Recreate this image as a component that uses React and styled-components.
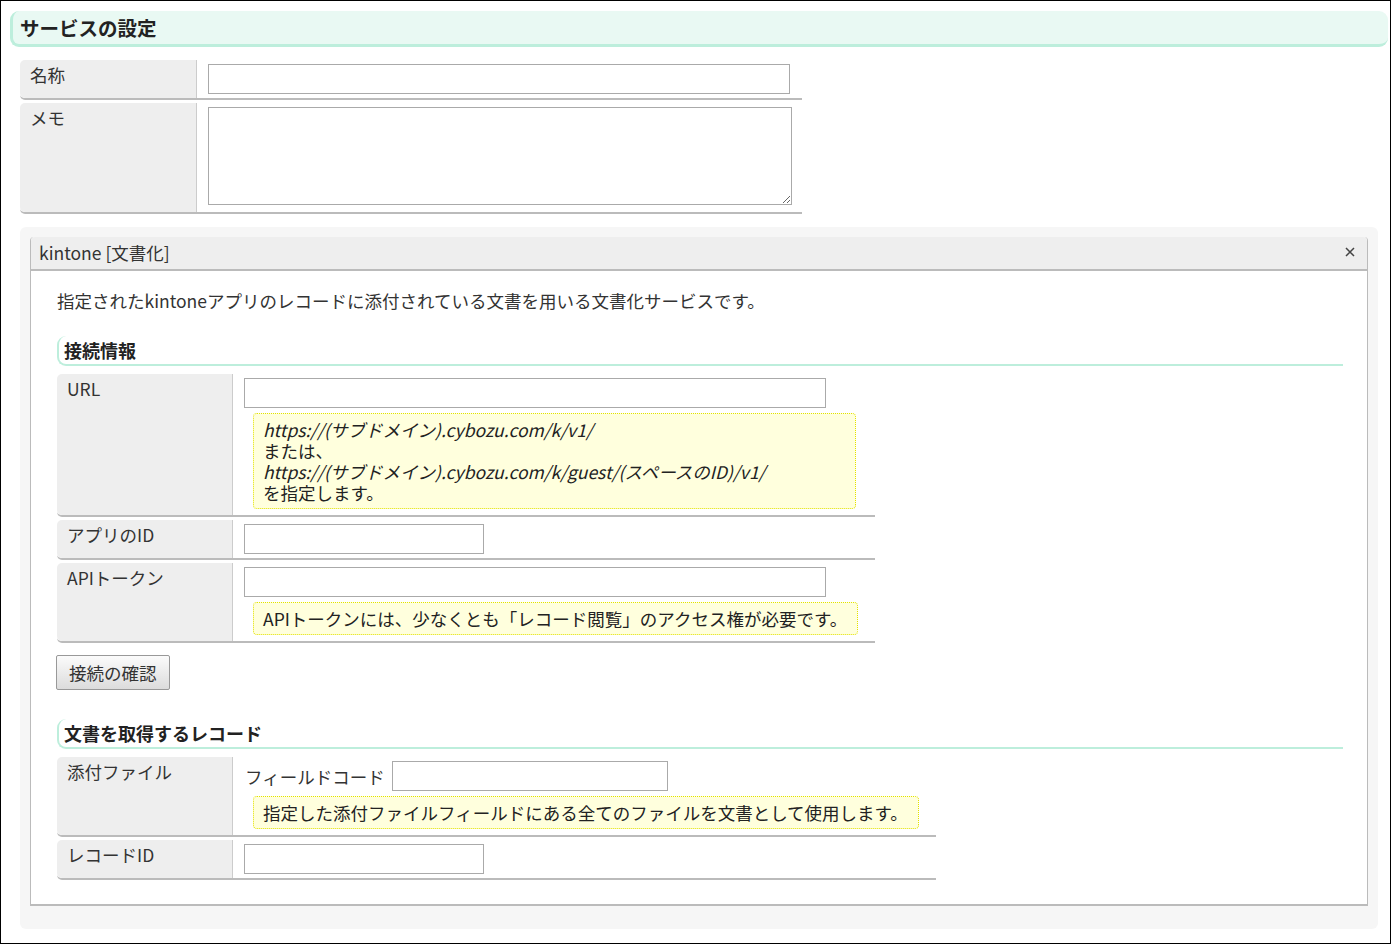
import React from 'react'
import styled, { createGlobalStyle } from 'styled-components'

const GlobalStyle = createGlobalStyle`
  html, body {
    margin: 0;
    padding: 0;
    background: #fff;
  }
  body {
    font-family: "Noto Sans CJK JP", "Noto Sans", sans-serif;
    font-size: 17.5px;
    line-height: 21px;
    color: #333;
  }
  * { box-sizing: border-box; }
`

const Frame = styled.div`
  width: 1391px;
  height: 944px;
  border: 1px solid #000;
  padding: 10px 2px 0 9px;
  overflow: hidden;
`

const PageTitle = styled.h1`
  margin: 0;
  height: 36px;
  display: flex;
  align-items: center;
  padding-left: 7px;
  font-size: 19.5px;
  font-weight: bold;
  color: #222;
  background: #e9f9f3;
  border-left: 3px solid #bdeedc;
  border-bottom: 3px solid #bdeedc;
  border-radius: 9px;
`

const SubTitle = styled.h2`
  margin: 0;
  height: 30px;
  display: flex;
  align-items: center;
  padding-left: 5px;
  font-size: 18px;
  font-weight: bold;
  color: #222;
  border-left: 2px solid #bdeedc;
  border-bottom: 2px solid #bdeedc;
  border-radius: 9px 0 0 9px;
`

const Table = styled.div`
  display: flex;
  flex-direction: column;
  gap: 3px;
  width: fit-content;
  margin: ${p => p.$margin || '0'};
`

const Row = styled.div`
  display: grid;
  grid-template-columns: ${p => p.$label}px auto;
  border-bottom: 2px solid #bbb;
  border-radius: 5px 0 0 5px;
`

const Label = styled.div`
  background: #eee;
  border-right: 1px solid #ccc;
  border-radius: 5px 0 0 5px;
  padding: 4px 10px;
`

const Value = styled.div`
  padding: 4px ${p => p.$right || 17}px 4px 11px;
`

const TextInput = styled.input`
  display: block;
  width: ${p => p.$w}px;
  height: 30px;
  border: 1px solid #aaa;
  background: #fff;
  font: inherit;
  padding: 0 4px;
`

const Memo = styled.textarea`
  display: block;
  width: 584px;
  height: 98px;
  border: 1px solid #aaa;
  font: inherit;
  margin-bottom: 3px;
`

const Note = styled.div`
  width: fit-content;
  min-width: ${p => p.$min || 0}px;
  margin: 5px 0 2px 9px;
  padding: 5px 10px 5px 9px;
  background: #ffffdd;
  border: 1px dotted #e2e200;
  border-radius: 4px;
  color: #222;
`

const Link = styled.div`
  font-style: italic;
`

const FieldLine = styled.div`
  display: flex;
  align-items: center;
  gap: 7px;
  padding-left: 1px;
`

const Panel = styled.div`
  margin: 13px 10px 0 10px;
  padding: 10px 10px 23px 10px;
  background: #f6f6f6;
  border-radius: 6px;
`

const Dialog = styled.div`
  background: #fff;
  border: 1px solid #bbb;
  border-top: 0;
  border-bottom: 2px solid #bbb;
  border-radius: 4px 4px 0 0;
`

const DialogHeader = styled.div`
  height: 34px;
  display: flex;
  align-items: center;
  justify-content: space-between;
  padding: 0 11px 2px 8px;
  background: #eee;
  border-bottom: 2px solid #bbb;
  border-radius: 4px 4px 0 0;
`

const CloseButton = styled.button`
  border: 0;
  background: none;
  padding: 0;
  width: 12px;
  height: 12px;
  display: flex;
  cursor: pointer;
`

const DialogBody = styled.div`
  padding: 19px 24px 24px 26px;
`

const Description = styled.p`
  margin: 0 0 25px 0;
`

const Button = styled.button`
  display: block;
  margin: 12px 0 29px -1px;
  height: 35px;
  padding: 0 12px;
  font: inherit;
  color: #333;
  background: linear-gradient(#fbfbfb, #dcdcdc);
  border: 1px solid #999;
  border-radius: 2px;
`

export default function App() {
  return (
    <Frame>
      <GlobalStyle />
      <PageTitle>サービスの設定</PageTitle>

      <Table $margin="13px 0 0 10px">
        <Row $label={177}>
          <Label>名称</Label>
          <Value $right={12}><TextInput $w={582} /></Value>
        </Row>
        <Row $label={177}>
          <Label>メモ</Label>
          <Value $right={10}><Memo /></Value>
        </Row>
      </Table>

      <Panel>
        <Dialog>
          <DialogHeader>
            <span>kintone [文書化]</span>
            <CloseButton aria-label="close">
              <svg width="12" height="12" viewBox="0 0 12 12">
                <path d="M2 2 L10 10 M10 2 L2 10" stroke="#444" strokeWidth="1.5" />
              </svg>
            </CloseButton>
          </DialogHeader>
          <DialogBody>
            <Description>指定されたkintoneアプリのレコードに添付されている文書を用いる文書化サービスです。</Description>

            <SubTitle>接続情報</SubTitle>
            <Table $margin="8px 0 0 0">
              <Row $label={176}>
                <Label>URL</Label>
                <Value>
                  <TextInput $w={582} />
                  <Note $min={603}>
                    <Link>https://(サブドメイン).cybozu.com/k/v1/</Link>
                    <div>または、</div>
                    <Link>https://(サブドメイン).cybozu.com/k/guest/(スペースのID)/v1/</Link>
                    <div>を指定します。</div>
                  </Note>
                </Value>
              </Row>
              <Row $label={176}>
                <Label>アプリのID</Label>
                <Value><TextInput $w={240} /></Value>
              </Row>
              <Row $label={176}>
                <Label>APIトークン</Label>
                <Value>
                  <TextInput $w={582} />
                  <Note>APIトークンには、少なくとも「レコード閲覧」のアクセス権が必要です。</Note>
                </Value>
              </Row>
            </Table>

            <Button>接続の確認</Button>

            <SubTitle>文書を取得するレコード</SubTitle>
            <Table $margin="8px 0 0 0">
              <Row $label={176}>
                <Label>添付ファイル</Label>
                <Value>
                  <FieldLine>
                    <span>フィールドコード</span>
                    <TextInput $w={276} />
                  </FieldLine>
                  <Note>指定した添付ファイルフィールドにある全てのファイルを文書として使用します。</Note>
                </Value>
              </Row>
              <Row $label={176}>
                <Label>レコードID</Label>
                <Value><TextInput $w={240} /></Value>
              </Row>
            </Table>
          </DialogBody>
        </Dialog>
      </Panel>
    </Frame>
  )
}
